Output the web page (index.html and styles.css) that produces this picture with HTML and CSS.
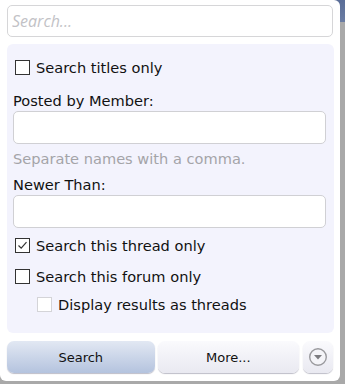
FILE: index.html
```html
<!DOCTYPE html>
<html lang="en">
<head>
  <meta charset="UTF-8">
  <title>Search</title>
  <link rel="stylesheet" href="styles.css">
</head>
<body>
  <div class="popup">
    <input class="search-box" type="text" placeholder="Search...">
    <div class="options">
      <label class="check"><span class="box"></span>Search titles only</label>
      <div class="field-label">Posted by Member:</div>
      <input class="field" type="text">
      <div class="hint">Separate names with a comma.</div>
      <div class="field-label newer">Newer Than:</div>
      <input class="field" type="text">
      <label class="check thread"><span class="box checked"><svg width="13" height="13" viewBox="0 0 13 13"><path d="M2.5 6.5 L5.2 9.2 L10.5 3.2" fill="none" stroke="#333" stroke-width="1.2"/></svg></span>Search this thread only</label>
      <label class="check forum"><span class="box"></span>Search this forum only</label>
      <label class="check sub"><span class="box light"></span>Display results as threads</label>
    </div>
    <div class="buttons">
      <button class="btn primary">Search</button>
      <button class="btn">More...</button>
      <button class="btn drop"><svg width="20" height="20" viewBox="0 0 20 20"><circle cx="10" cy="10" r="8.3" fill="#f4f4f8" stroke="#9a9a9e" stroke-width="1.4"/><path d="M6 8 L14 8 L10 12.5 Z" fill="#7c7c80"/></svg></button>
    </div>
  </div>
</body>
</html>
```
FILE: styles.css
```css
body {margin:0; height:384px; background:linear-gradient(#5a6d97 0, #6b7da3 22px, #a9a9a9 22px); font-family:"DejaVu Sans", Verdana, sans-serif; font-size:14.6px; color:#111; overflow:hidden;}
.popup {width:340px; height:381px; background:#fff; border-radius:0 6px 6px 6px; box-sizing:border-box; padding:5px 7px 0 7px;}
.search-box {display:block; width:326px; height:32px; box-sizing:border-box; border:1px solid #d6d6d8; border-radius:5px; padding:0 4px; font-family:"Open Sans", sans-serif; font-size:16px; outline:none;}
.search-box::placeholder {color:#c2c2c6; font-style:italic;}
.options {margin-top:7px; background:#f3f3fd; border-radius:6px; padding:16px 7px 0 6px; height:289px; box-sizing:border-box; width:327px;}
.check {display:flex; align-items:center; height:15px;}
.box {width:13px; height:13px; border:1px solid #333; background:#fff; margin:0 6px 0 2px; display:flex; flex-shrink:0;}
.box.light {border-color:#d4d4d8;}
.field-label {margin-top:18px; line-height:16px;}
.field {display:block; margin-top:2px; width:313px; height:33px; box-sizing:border-box; border:1px solid #d0d0d4; border-radius:5px; background:#fff; outline:none;}
.hint {margin-top:7px; color:#a4a4a8; line-height:16px;}
.newer {margin-top:10px;}
.thread {margin-top:10px;}
.forum {margin-top:16px;}
.sub {margin-top:12px; padding-left:22px; height:16px;}
.buttons {display:flex; margin-top:8px; gap:3px;}
.btn {height:32px; border:none; border-radius:7px; font-family:"DejaVu Sans", sans-serif; font-size:13px; color:#111; background:linear-gradient(#fafafd, #e9e9f1); box-shadow:0 1px 1px #bdbdc8; padding:0;}
.primary {width:148px; background:linear-gradient(#e2e8f3, #b4c3de);}
.btn:nth-child(2) {width:142px;}
.drop {width:30px; display:flex; align-items:center; justify-content:center; margin-left:1px;}
```
